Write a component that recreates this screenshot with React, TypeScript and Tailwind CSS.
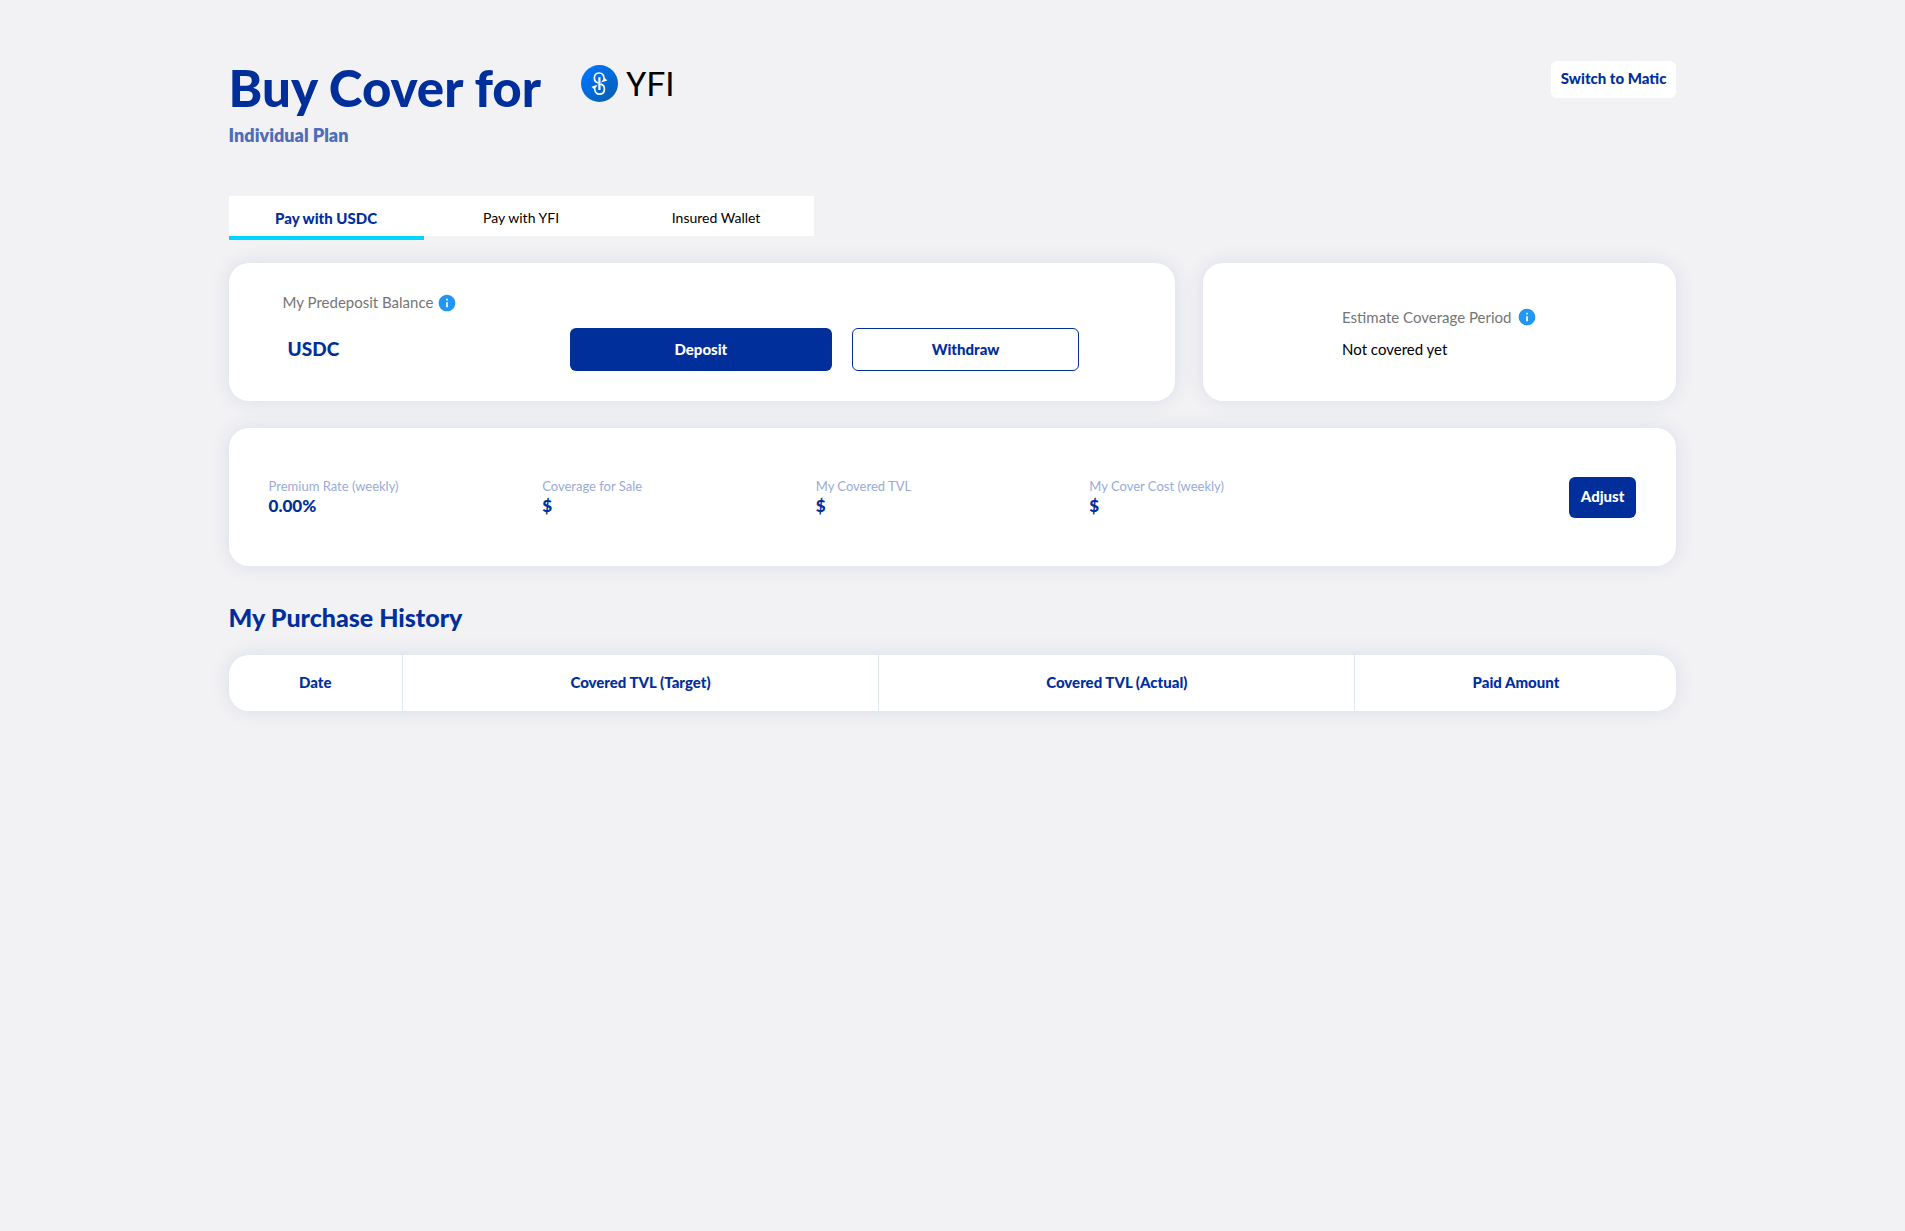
import { MdInfo } from "react-icons/md";

const card = "rounded-[20px] bg-white shadow-[0_0_20px_rgba(0,46,155,0.1)]";

const tabs = ["Pay with USDC", "Pay with YFI", "Insured Wallet"];

const stats = [
  { label: "Premium Rate (weekly)", value: "0.00%" },
  { label: "Coverage for Sale", value: "$" },
  { label: "My Covered TVL", value: "$" },
  { label: "My Cover Cost (weekly)", value: "$" },
];

function YfiLogo() {
  return (
    <svg viewBox="0 0 37 37" className="size-[37px]" aria-hidden="true">
      <defs>
        <linearGradient id="yfi" x1="0" y1="0" x2="1" y2="1">
          <stop offset="0.15" stopColor="#0074fa" />
          <stop offset="0.85" stopColor="#0660b8" />
        </linearGradient>
      </defs>
      <circle cx="18.5" cy="18.5" r="18.5" fill="url(#yfi)" />
      <g fill="none" stroke="#fff" strokeWidth="1.7">
        <path d="M18.400 12.200v12.800" strokeWidth="2.200" />
        <path d="M17.500 18C11.500 16.800 12.300 8 18.200 8C21.300 8 23 10.300 23.200 14" />
        <path d="M19.300 19.200C25.300 20.400 24.500 29.200 18.600 29.200C15.500 29.200 13.800 26.900 13.600 23.200" />
      </g>
      <path d="M20 17.500l6.400-2-3-2.700zM16.800 19.700l-6.400 2 3 2.700z" fill="#fff" />
    </svg>
  );
}

function InfoButton({ label }: { label: string }) {
  return (
    <button type="button" aria-label={label} className="text-[#2196f3]">
      <MdInfo size={20} />
    </button>
  );
}

export default function App() {
  return (
    <div className="min-h-screen bg-[#f2f2f4] px-[12%] pt-[61px] pb-16 font-['Lato',sans-serif] text-[15px] leading-5 text-[#002e9b]">
      <header className="flex items-start justify-between">
        <div>
          <div className="flex items-start gap-10">
            <h1 className="text-[51px] leading-[54px] font-black">Buy Cover for</h1>
            <div className="flex items-center gap-2 pt-1">
              <YfiLogo />
              <span className="pt-0.5 font-['Roboto',sans-serif] text-[34px] leading-[35px] text-black">YFI</span>
            </div>
          </div>
          <p className="mt-2 text-lg leading-6 font-extrabold text-[#4d6db9]">Individual Plan</p>
        </div>
        <button type="button" className="rounded-md bg-white px-[10px] pt-[7px] pb-[9px] leading-[21px] font-black">
          Switch to Matic
        </button>
      </header>

      <div role="tablist" className="mt-[49px] grid h-11 w-[585px] grid-cols-3">
        {tabs.map((tab, i) => (
          <button
            key={tab}
            type="button"
            role="tab"
            aria-selected={i === 0}
            className={
              i === 0
                ? "h-11 border-b-4 border-[#00d4ff] bg-white pt-1 font-black"
                : "h-10 bg-white pt-1 text-sm text-black"
            }
          >
            {tab}
          </button>
        ))}
      </div>

      <main>
        <div className="mt-[23px] grid grid-cols-[2fr_1fr] gap-7">
          <section className={`${card} pt-7 pr-24 pb-[30px] pl-[54px]`}>
            <div className="flex items-center gap-1 leading-[22px] text-[#757575]">
              <span className="pb-0.5">My Predeposit Balance</span>
              <InfoButton label="About predeposit balance" />
            </div>
            <div className="mt-[13px] grid h-[43px] grid-cols-[287fr_262fr_20px_227fr]">
              <span className="self-center pb-0.5 pl-[5px] text-[19px] font-black">USDC</span>
              <button type="button" className="rounded-md bg-[#002e9b] pb-0.5 font-black text-white">
                Deposit
              </button>
              <button type="button" className="col-start-4 rounded-md border border-[#002e9b] pb-0.5 font-black">
                Withdraw
              </button>
            </div>
          </section>
          <section className={`${card} flex items-center justify-center pt-0.5`}>
            <div className="flex flex-col gap-3">
              <div className="flex items-center gap-1.5 text-[#757575]">
                <span>Estimate Coverage Period</span>
                <InfoButton label="About coverage period" />
              </div>
              <p className="text-black">Not covered yet</p>
            </div>
          </section>
        </div>

        <section className={`${card} mt-[27px] grid min-h-[138px] grid-cols-5 items-center px-10`}>
          {stats.map((stat) => (
            <dl key={stat.label} className="pb-0.5">
              <dt className="text-[13px] leading-5 text-[#99abd7]">{stat.label}</dt>
              <dd className="text-[17px] leading-5 font-black">{stat.value}</dd>
            </dl>
          ))}
          <button
            type="button"
            className="h-[41px] justify-self-end rounded-md bg-[#002e9b] px-3 pb-0.5 font-black text-white"
          >
            Adjust
          </button>
        </section>

        <h2 className="mt-[35px] text-[25px] leading-8 font-black">My Purchase History</h2>
        <div className={`${card} mt-[22px] overflow-hidden`}>
          <table className="w-full table-fixed">
            <colgroup>
              <col className="w-[12%]" />
              <col className="w-[32.9%]" />
              <col className="w-[32.9%]" />
              <col className="w-[22.2%]" />
            </colgroup>
            <thead>
              <tr className="h-14">
                <th scope="col" className="border-r border-[#dcebe9] pb-0.5 font-black">Date</th>
                <th scope="col" className="border-r border-[#dcebe9] pb-0.5 font-black">Covered TVL (Target)</th>
                <th scope="col" className="border-r border-[#dcebe9] pb-0.5 font-black">Covered TVL (Actual)</th>
                <th scope="col" className="pb-0.5 font-black">Paid Amount</th>
              </tr>
            </thead>
          </table>
        </div>
      </main>
    </div>
  );
}
